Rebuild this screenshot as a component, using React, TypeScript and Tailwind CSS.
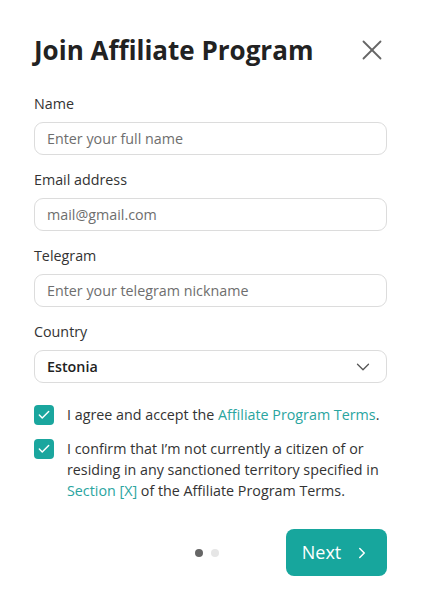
import React from 'react';
import { X, ChevronDown, ChevronRight, Check } from 'lucide-react';

const Field: React.FC<{ label: string; placeholder: string }> = ({ label, placeholder }) => (
  <div className="flex flex-col">
    <label className="text-[14.3px] leading-[20px] text-[#333]">{label}</label>
    <div className="mt-[8px] h-[33px] rounded-[9px] border border-[#dcdcdc] px-[12px] flex items-center">
      <span className="text-[14.3px] text-[#6e6e6e]">{placeholder}</span>
    </div>
  </div>
);

const Box: React.FC = () => (
  <div className="w-[20px] h-[20px] shrink-0 rounded-[4px] bg-[#1aa69e] flex items-center justify-center text-white">
    <Check size={14} strokeWidth={2.5} />
  </div>
);

export default function App() {
  return (
    <div className="w-[421px] h-[602px] bg-white font-['Open_Sans',sans-serif] text-[#333]">
      <div className="px-[34px] pt-[32px]">
        <div className="flex items-center justify-between">
          <h1 className="text-[26px] leading-[36px] font-bold text-[#222]">Join Affiliate Program</h1>
          <X size={34} strokeWidth={1.3} className="text-[#666] -mr-[2px]" />
        </div>

        <div className="mt-[26px] flex flex-col gap-[15px]">
          <Field label="Name" placeholder="Enter your full name" />
          <Field label="Email address" placeholder="mail@gmail.com" />
          <Field label="Telegram" placeholder="Enter your telegram nickname" />
          <div className="flex flex-col">
            <label className="text-[14.3px] leading-[20px] text-[#333]">Country</label>
            <div className="mt-[8px] h-[33px] rounded-[9px] border border-[#dcdcdc] pl-[12px] pr-[12px] flex items-center justify-between">
              <span className="text-[14.3px] font-semibold text-[#222]">Estonia</span>
              <ChevronDown size={22} strokeWidth={1.4} className="text-[#555]" />
            </div>
          </div>
        </div>

        <div className="mt-[22px] flex flex-col gap-[14px] text-[14.3px] leading-[21px] text-[#333]">
          <div className="flex gap-[13px] items-start">
            <Box />
            <p className="-mt-[1px]">
              I agree and accept the <span className="text-[#2aa5a0]">Affiliate Program Terms</span>.
            </p>
          </div>
          <div className="flex gap-[13px] items-start">
            <Box />
            <p className="-mt-[1px]">
              I confirm that I’m not currently a citizen of or residing in any sanctioned territory specified in{' '}
              <span className="text-[#2aa5a0]">Section [X]</span> of the Affiliate Program Terms.
            </p>
          </div>
        </div>

        <div className="mt-[28px] flex items-center justify-end">
          <div className="flex gap-[8px] mr-[67px]">
            <span className="w-[8px] h-[8px] rounded-full bg-[#666]" />
            <span className="w-[8px] h-[8px] rounded-full bg-[#e6e6e6]" />
          </div>
          <button className="w-[101px] h-[47px] rounded-[8px] bg-[#17a69d] text-white flex items-center justify-center gap-[12px]">
            <span className="text-[18px] font-medium">Next</span>
            <ChevronRight size={18} strokeWidth={2} />
          </button>
        </div>
      </div>
    </div>
  );
}
